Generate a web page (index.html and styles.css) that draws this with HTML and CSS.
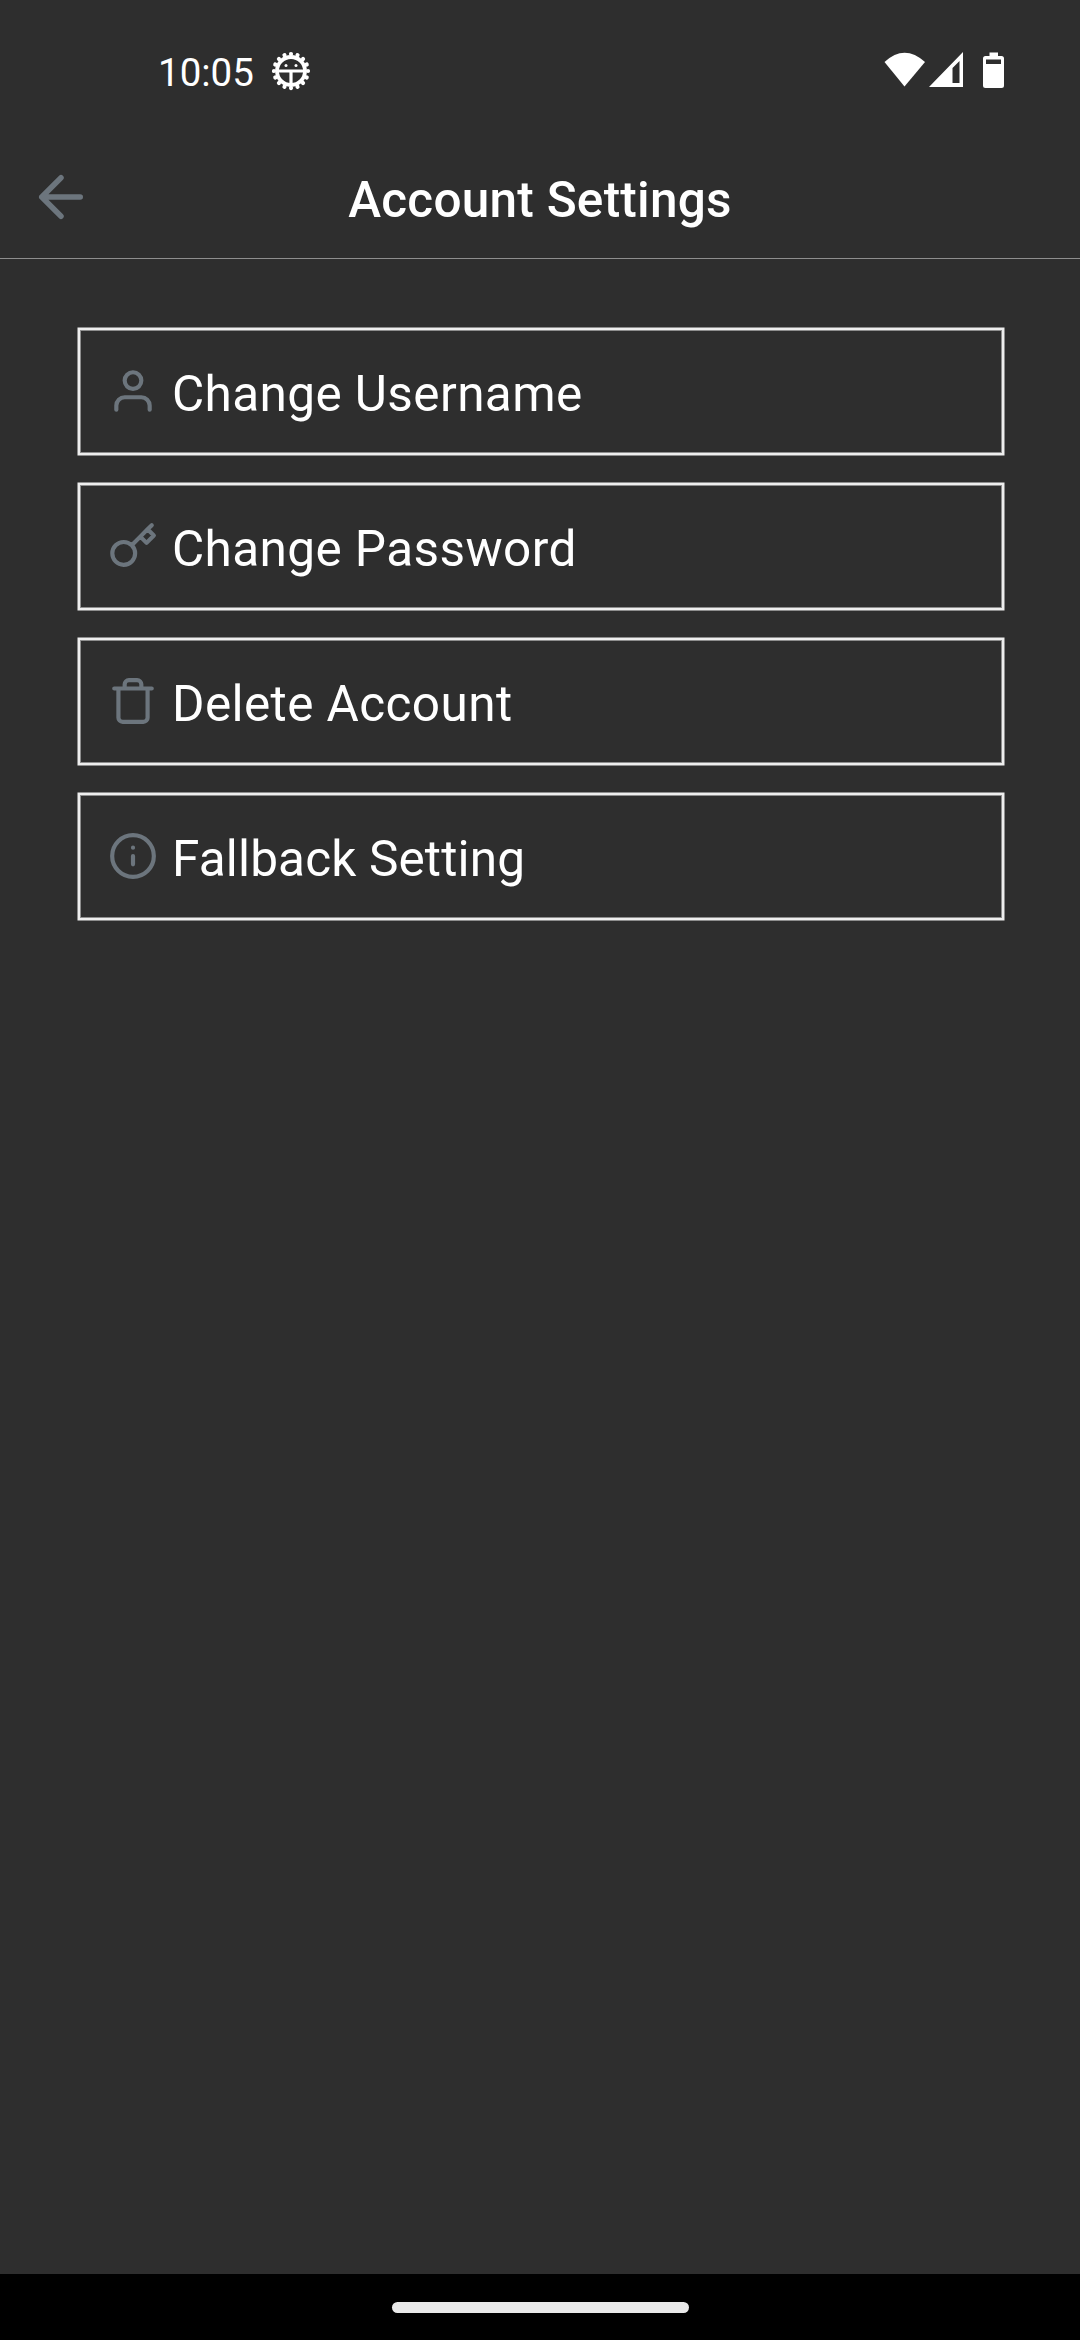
FILE: index.html
```html
<!DOCTYPE html>
<html lang="en">
<head>
<meta charset="utf-8">
<title>Account Settings</title>
<link rel="stylesheet" href="styles.css">
</head>
<body>
<div class="screen">
  <div class="status">
    <div class="status-left">
      <span class="clock">10:05</span>
      <svg class="debug" viewBox="0 0 40 40">
        <circle class="teeth" cx="20" cy="20" r="17" pathLength="160"/>
        <circle class="ring" cx="20" cy="20" r="14"/>
        <path class="bars" d="M6 20H34M20 20V34"/>
        <circle cx="15" cy="14.400" r="1.500"/><circle cx="25" cy="14.400" r="1.500"/>
      </svg>
    </div>
    <svg class="indicators" viewBox="0 0 122 38">
      <path d="M0.500 10Q20.500-8.500 41 10L20.500 34.500Z"/>
      <path fill-rule="evenodd" d="M45 35L79 0V35ZM68.500 16V31H75.500V9Z"/>
      <path fill-rule="evenodd" d="M105.500 0.500H114V4H117.500Q120 4 120 6.500V33.500Q120 36 117.500 36H101.500Q99 36 99 33.500V6.500Q99 4 101.500 4H105.500ZM102 7.500V12H117V7.500Z"/>
    </svg>
  </div>
  <header class="header">
    <svg class="icon back" viewBox="0 0 24 24"><path d="M19 12H5M12 19L5 12L12 5"/></svg>
    <h1 class="title">Account Settings</h1>
  </header>
  <main class="options">
    <button class="option"><svg class="icon" viewBox="0 0 24 24"><path d="M20 21v-2a4 4 0 0 0-4-4H8a4 4 0 0 0-4 4v2"/><circle cx="12" cy="7" r="4"/></svg><span>Change Username</span></button>
    <button class="option"><svg class="icon" viewBox="0 0 24 24"><path d="M21 2l-2 2m-7.610 7.610a5.500 5.500 0 1 1-7.778 7.778 5.500 5.500 0 0 1 7.777-7.777zm0 0L15.500 7.500m0 0l3 3L22 7l-3-3m-3.500 3.500L19 4"/></svg><span>Change Password</span></button>
    <button class="option"><svg class="icon" viewBox="0 0 24 24"><path d="M3 6H21M19 6v14a2 2 0 0 1-2 2H7a2 2 0 0 1-2-2V6m3 0V4a2 2 0 0 1 2-2h4a2 2 0 0 1 2 2v2"/></svg><span>Delete Account</span></button>
    <button class="option tight"><svg class="icon" viewBox="0 0 24 24"><circle cx="12" cy="12" r="10"/><path d="M12 16v-4M12 8h.01"/></svg><span>Fallback Setting</span></button>
  </main>
  <footer class="navbar"><div class="handle"></div></footer>
</div>
</body>
</html>
```
FILE: styles.css
```css
* { box-sizing: border-box; }
body { margin: 0; background: #2e2e2e; font-family: Roboto, sans-serif; color: #fff; }
.screen { width: 1080px; height: 2340px; display: flex; flex-direction: column; }
.status { height: 136px; padding: 6px 74px 0 158px; display: flex; align-items: center; justify-content: space-between; }
.status-left { display: flex; align-items: center; gap: 17px; }
.clock { font-size: 38.5px; line-height: 46px; padding-top: 3px; }
.debug { width: 40px; height: 40px; fill: #fff; }
.debug .ring { fill: none; stroke: #fff; stroke-width: 3.8; }
.debug .bars { fill: none; stroke: #fff; stroke-width: 3.2; }
.debug .teeth { fill: none; stroke: #fff; stroke-width: 4.2; stroke-dasharray: 0.01 9.99; stroke-linecap: round; }
.indicators { width: 122px; height: 38px; fill: #fff; }
.header { height: 123px; border-bottom: 1px solid #8e8e8e; display: grid; grid-template-columns: 94px 1fr 94px; align-items: center; }
.icon { flex: none; width: 50px; height: 50px; fill: none; stroke: #6c757d; stroke-width: 2; stroke-linecap: round; stroke-linejoin: round; }
.back { width: 66px; height: 66px; margin-left: 28px; }
.title { margin: 5px 0 0; text-align: center; font-size: 49.5px; font-weight: 500; line-height: 58px; letter-spacing: 0.25px; }
.options { flex: 1; padding: 68px 75px 0 77px; display: flex; flex-direction: column; gap: 26px; }
.option { height: 129px; border: 1px solid #8e8e8e; border-radius: 1px; box-shadow: inset 0 0 0 2px #eee, inset 0 0 0 3px #8e8e8e; background: transparent; color: #fff; padding: 0 30px; display: flex; align-items: center; gap: 14px; font: 400 49.5px/58px Roboto, sans-serif; letter-spacing: 0.4px; }
.option.tight { letter-spacing: 0.15px; }
.option .icon { margin-bottom: 1px; }
.option span { padding-top: 5px; }
.navbar { height: 66px; background: #000; display: flex; justify-content: center; align-items: center; }
.handle { width: 297px; height: 11px; border-radius: 6px; background: #eaeaea; }
```
